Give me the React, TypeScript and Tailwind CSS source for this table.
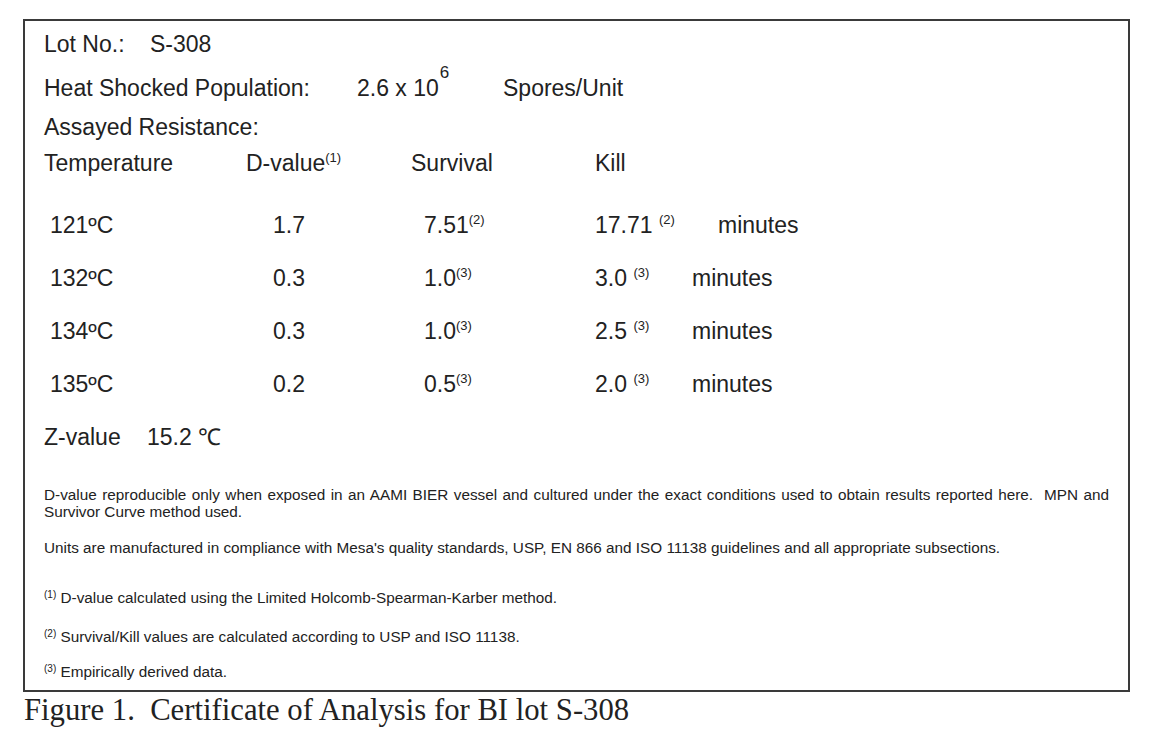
import React from "react";

function Sup({ children }: { children: React.ReactNode }) {
  return <span className="relative -top-[9px] text-[13px] leading-none">{children}</span>;
}

function FootSup({ children }: { children: React.ReactNode }) {
  return <span className="relative -top-[5px] text-[10px] leading-none">{children}</span>;
}

const rows = [
  { t: "121ºC", d: "1.7", s: "7.51", sn: "(2)", k: "17.71", kn: "(2)", kw: "w-[123px]" },
  { t: "132ºC", d: "0.3", s: "1.0", sn: "(3)", k: "3.0", kn: "(3)", kw: "w-[97px]" },
  { t: "134ºC", d: "0.3", s: "1.0", sn: "(3)", k: "2.5", kn: "(3)", kw: "w-[97px]" },
  { t: "135ºC", d: "0.2", s: "0.5", sn: "(3)", k: "2.0", kn: "(3)", kw: "w-[97px]" },
];

export default function App() {
  return (
    <div className="w-[1158px] h-[738px] bg-white pt-[19px] pl-[23px] text-[#222]">
      <div className="w-[1107px] h-[673px] border-2 border-[#3a3a3a] px-[19px] font-['Liberation_Sans',Arial,sans-serif]">
        <div className="text-[23px] whitespace-nowrap">
          <div className="h-[46px] flex items-center">
            <span className="w-[106px]">Lot No.:</span>
            <span>S-308</span>
          </div>
          <div className="h-[42px] flex items-center">
            <span className="w-[313px]">Heat Shocked Population:</span>
            <span className="w-[146px]">
              2.6 x 10<span className="relative -top-[18px] text-[17px] leading-none ml-[1px]">6</span>
            </span>
            <span>Spores/Unit</span>
          </div>
          <div className="h-[36px] flex items-center">Assayed Resistance:</div>
          <div className="h-[36px] flex items-center">
            <span className="w-[202px]">Temperature</span>
            <span className="w-[165px]">
              D-value<Sup>(1)</Sup>
            </span>
            <span className="w-[184px]">Survival</span>
            <span>Kill</span>
          </div>
          <div className="mt-[18px]">
            {rows.map((r) => (
              <div key={r.t} className="h-[53px] flex items-center pl-[6px]">
                <span className="w-[223px]">{r.t}</span>
                <span className="w-[151px]">{r.d}</span>
                <span className="w-[171px]">
                  {r.s}
                  <Sup>{r.sn}</Sup>
                </span>
                <span className={r.kw}>
                  {r.k} <Sup>{r.kn}</Sup>
                </span>
                <span>minutes</span>
              </div>
            ))}
          </div>
          <div className="h-[53px] flex items-center">
            <span className="w-[103px]">Z-value</span>
            <span>15.2 ℃</span>
          </div>
        </div>
        <div className="text-[15.3px] leading-[17px]">
          <p className="mt-[22px] text-justify">
            D-value reproducible only when exposed in an AAMI BIER vessel and cultured under the exact conditions used to obtain results reported here.&nbsp; MPN and Survivor Curve method used.
          </p>
          <p className="mt-[19px]">
            Units are manufactured in compliance with Mesa's quality standards, USP, EN 866 and ISO 11138 guidelines and all appropriate subsections.
          </p>
          <p className="mt-[33px]">
            <FootSup>(1)</FootSup> D-value calculated using the Limited Holcomb-Spearman-Karber method.
          </p>
          <p className="mt-[22px]">
            <FootSup>(2)</FootSup> Survival/Kill values are calculated according to USP and ISO 11138.
          </p>
          <p className="mt-[18px]">
            <FootSup>(3)</FootSup> Empirically derived data.
          </p>
        </div>
      </div>
      <div className="pl-[1px] text-[30.7px] leading-[36px] font-['Liberation_Serif','Times_New_Roman',serif] text-[#222] whitespace-pre">
        Figure 1.  Certificate of Analysis for BI lot S-308
      </div>
    </div>
  );
}
